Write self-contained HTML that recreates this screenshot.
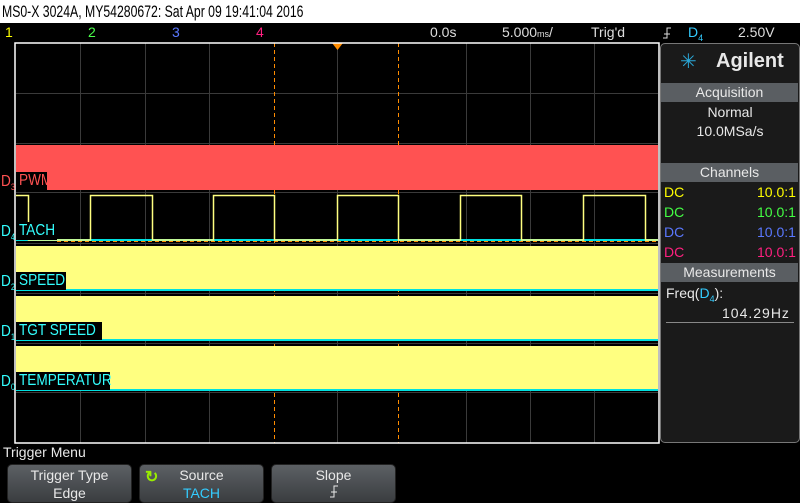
<!DOCTYPE html>
<html><head><meta charset="utf-8"><style>
*{margin:0;padding:0;box-sizing:border-box}
body{width:800px;height:503px;background:#000;position:relative;overflow:hidden;font-family:"Liberation Sans",sans-serif;color:#ddd}
.a{position:absolute;white-space:nowrap}
.t{font-size:14px}
.l{font-size:16px;line-height:18px;transform:scaleX(.85);transform-origin:left center}
.hdr{position:absolute;left:661px;width:137px;height:19px;background:#5a5e62;color:#e8e8e8;font-size:14px;text-align:center;line-height:19px}
.btn{position:absolute;top:464px;width:125px;height:39px;border-radius:5px;background:linear-gradient(#5c6064,#3a3d40);border:1px solid #222;color:#e8e8e8;font-size:14px;text-align:center;line-height:18px;padding-top:1px}
sub{font-size:9px}
</style></head><body>
<div class="a" style="left:0;top:0;width:800px;height:23px;background:#fff"></div>
<div class="a" style="left:2px;top:0;color:#000;font-size:17px;line-height:23px;transform:scaleX(.72);transform-origin:left center">MS0-X 3024A, MY54280672: Sat Apr 09 19:41:04 2016</div>
<div class="a t" style="left:5px;top:24px;color:#ffff00">1</div>
<div class="a t" style="left:88px;top:24px;color:#4cff4c">2</div>
<div class="a t" style="left:172px;top:24px;color:#5a78ff">3</div>
<div class="a t" style="left:256px;top:24px;color:#ff2080">4</div>
<div class="a t" style="left:430px;top:24px">0.0s</div>
<div class="a t" style="left:502px;top:24px">5.000<span style="font-size:9px">ms</span>/</div>
<div class="a t" style="left:591px;top:24px">Trig'd</div>
<svg class="a" style="left:662px;top:27px" width="10" height="12"><path d="M1 11H5V1H9M2 7H8" stroke="#ddd" fill="none"/></svg>
<div class="a t" style="left:688px;top:24px;color:#3cf">D<sub>4</sub></div>
<div class="a t" style="left:738px;top:24px">2.50V</div>

<svg class="a" style="left:0;top:0" width="660" height="445">
<g stroke="#3a3a3a" stroke-width="1">
<line x1="80.5" y1="43" x2="80.5" y2="443"/><line x1="145.5" y1="43" x2="145.5" y2="443"/><line x1="209.5" y1="43" x2="209.5" y2="443"/><line x1="337.5" y1="43" x2="337.5" y2="443"/><line x1="466.5" y1="43" x2="466.5" y2="443"/><line x1="530.5" y1="43" x2="530.5" y2="443"/><line x1="594.5" y1="43" x2="594.5" y2="443"/>
<line x1="16" y1="93.5" x2="658" y2="93.5"/><line x1="16" y1="143.5" x2="658" y2="143.5"/><line x1="16" y1="192.5" x2="658" y2="192.5"/><line x1="16" y1="243.5" x2="658" y2="243.5"/><line x1="16" y1="293.5" x2="658" y2="293.5"/><line x1="16" y1="343.5" x2="658" y2="343.5"/><line x1="16" y1="392.5" x2="658" y2="392.5"/>
</g>
<line x1="274.5" y1="43" x2="274.5" y2="443" stroke="#ff8c00" stroke-dasharray="4,3"/>
<line x1="398.5" y1="43" x2="398.5" y2="443" stroke="#ff8c00" stroke-dasharray="4,3"/>
<polygon points="332,43 343,43 337.5,50" fill="#ff8c00"/>
<rect x="16" y="145" width="642" height="45" fill="#ff5252"/>
<rect x="16" y="246" width="642" height="43" fill="#ffff80"/><rect x="16" y="289" width="642" height="2" fill="#00e0e0"/>
<rect x="16" y="296" width="642" height="43" fill="#ffff80"/><rect x="16" y="339" width="642" height="2" fill="#00e0e0"/>
<rect x="16" y="346" width="642" height="43" fill="#ffff80"/><rect x="16" y="389" width="642" height="2" fill="#00e0e0"/>
<rect x="16" y="239" width="642" height="2" fill="#00e0e0"/>
<polyline fill="none" stroke="#ffff80" stroke-width="1.5" points="16,195.5 28.5,195.5 28.5,240 90.5,240 90.5,195.5 152.5,195.5 152.5,240 213.5,240 213.5,195.5 274.5,195.5 274.5,240 337.5,240 337.5,195.5 398.5,195.5 398.5,240 460.5,240 460.5,195.5 521.5,195.5 521.5,240 583.5,240 583.5,195.5 645.5,195.5 645.5,240 658,240"/>
<line x1="57" y1="241.5" x2="658" y2="241.5" stroke="#ff8c00" stroke-dasharray="4,3"/>
<rect x="15" y="43" width="644" height="400" fill="none" stroke="#fff" stroke-width="1.5"/>
</svg>
<div class="a" style="left:16px;top:172px;width:31px;height:18px;background:#000"></div>
<div class="a" style="left:16px;top:222px;width:41px;height:18px;background:#000"></div>
<div class="a" style="left:16px;top:272px;width:50px;height:18px;background:#000"></div>
<div class="a" style="left:16px;top:322px;width:86px;height:18px;background:#000"></div>
<div class="a" style="left:16px;top:372px;width:94px;height:18px;background:#000"></div>
<div class="a l" style="left:1px;top:173px;color:#ff5252">D<sub>3</sub></div><div class="a l" style="left:19px;top:172px;color:#ff5252">PWM</div>
<div class="a l" style="left:1px;top:223px;color:#3ff">D<sub>4</sub></div><div class="a l" style="left:19px;top:222px;color:#3ff">TACH</div>
<div class="a l" style="left:1px;top:273px;color:#3ff">D<sub>2</sub></div><div class="a l" style="left:19px;top:272px;color:#3ff">SPEED</div>
<div class="a l" style="left:1px;top:323px;color:#3ff">D<sub>1</sub></div><div class="a l" style="left:19px;top:322px;color:#3ff">TGT SPEED</div>
<div class="a l" style="left:1px;top:373px;color:#3ff">D<sub>0</sub></div><div class="a l" style="left:19px;top:372px;color:#3ff">TEMPERATUR</div>

<div class="a" style="left:660px;top:43px;width:140px;height:400px;background:#1a1a1a;border:1px solid #777;border-radius:5px"></div>
<div class="a" style="left:680px;top:50px;color:#2aa8d8;font-size:20px;line-height:24px">✳</div>
<div class="a" style="left:716px;top:50px;color:#e8e8e8;font-size:20px;font-weight:bold">Agilent</div>
<div class="hdr" style="top:83px">Acquisition</div>
<div class="a t" style="left:660px;width:140px;text-align:center;top:104px;color:#e8e8e8">Normal</div>
<div class="a t" style="left:660px;width:140px;text-align:center;top:123px;color:#e8e8e8">10.0MSa/s</div>
<div class="hdr" style="top:163px">Channels</div>
<div class="a t" style="left:664px;top:184px;color:#ff0">DC</div><div class="a t" style="left:757px;top:184px;color:#ff0">10.0:1</div>
<div class="a t" style="left:664px;top:204px;color:#4f4">DC</div><div class="a t" style="left:757px;top:204px;color:#4f4">10.0:1</div>
<div class="a t" style="left:664px;top:224px;color:#5a78ff">DC</div><div class="a t" style="left:757px;top:224px;color:#5a78ff">10.0:1</div>
<div class="a t" style="left:664px;top:244px;color:#ff2080">DC</div><div class="a t" style="left:757px;top:244px;color:#ff2080">10.0:1</div>
<div class="hdr" style="top:263px">Measurements</div>
<div class="a t" style="left:666px;top:285px;color:#e8e8e8">Freq(<span style="color:#3cf">D<sub>4</sub></span>):</div>
<div class="a t" style="left:722px;top:305px;color:#e8e8e8;letter-spacing:1px">104.29Hz</div>
<div class="a" style="left:666px;top:322px;width:128px;height:1px;background:#888"></div>

<div class="a t" style="left:3px;top:444px;color:#e8e8e8">Trigger Menu</div>
<div class="btn" style="left:7px">Trigger Type<br>Edge</div>
<div class="btn" style="left:139px">Source<br><span style="color:#3cf">TACH</span></div>
<div class="a" style="left:145px;top:467px;color:#9e0;font-size:16px;font-weight:bold">↻</div>
<div class="btn" style="left:271px">Slope</div>
<svg class="a" style="left:329px;top:485px" width="10" height="13"><path d="M1 12H5V1H9M2 7H8" stroke="#e8e8e8" fill="none"/></svg>
</body></html>
